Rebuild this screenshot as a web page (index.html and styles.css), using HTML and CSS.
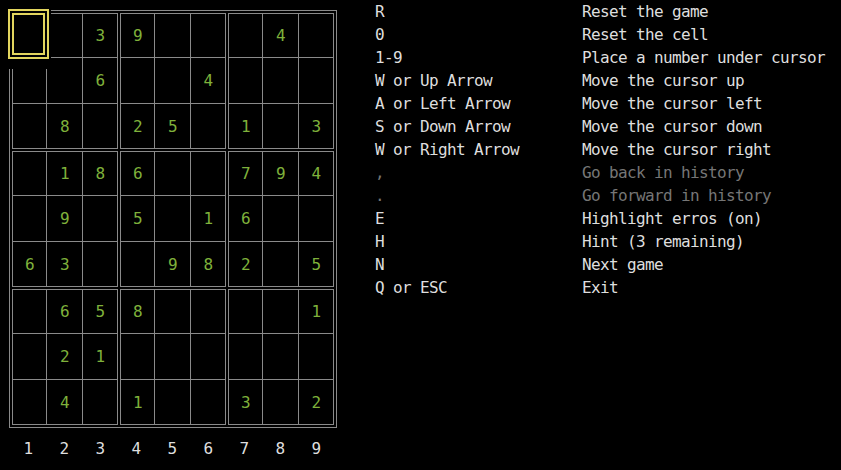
FILE: index.html
```html
<!DOCTYPE html>
<html>
<head>
<meta charset="utf-8">
<link rel="stylesheet" href="styles.css">
</head>
<body>
<div class="screen">
  <section class="game">
    <div class="board">
      <div class="block">
        <div class="cell"></div><div class="cell"></div><div class="cell">3</div>
        <div class="cell"></div><div class="cell"></div><div class="cell">6</div>
        <div class="cell"></div><div class="cell">8</div><div class="cell"></div>
      </div>
      <div class="block">
        <div class="cell">9</div><div class="cell"></div><div class="cell"></div>
        <div class="cell"></div><div class="cell"></div><div class="cell">4</div>
        <div class="cell">2</div><div class="cell">5</div><div class="cell"></div>
      </div>
      <div class="block">
        <div class="cell"></div><div class="cell">4</div><div class="cell"></div>
        <div class="cell"></div><div class="cell"></div><div class="cell"></div>
        <div class="cell">1</div><div class="cell"></div><div class="cell">3</div>
      </div>
      <div class="block">
        <div class="cell"></div><div class="cell">1</div><div class="cell">8</div>
        <div class="cell"></div><div class="cell">9</div><div class="cell"></div>
        <div class="cell">6</div><div class="cell">3</div><div class="cell"></div>
      </div>
      <div class="block">
        <div class="cell">6</div><div class="cell"></div><div class="cell"></div>
        <div class="cell">5</div><div class="cell"></div><div class="cell">1</div>
        <div class="cell"></div><div class="cell">9</div><div class="cell">8</div>
      </div>
      <div class="block">
        <div class="cell">7</div><div class="cell">9</div><div class="cell">4</div>
        <div class="cell">6</div><div class="cell"></div><div class="cell"></div>
        <div class="cell">2</div><div class="cell"></div><div class="cell">5</div>
      </div>
      <div class="block">
        <div class="cell"></div><div class="cell">6</div><div class="cell">5</div>
        <div class="cell"></div><div class="cell">2</div><div class="cell">1</div>
        <div class="cell"></div><div class="cell">4</div><div class="cell"></div>
      </div>
      <div class="block">
        <div class="cell">8</div><div class="cell"></div><div class="cell"></div>
        <div class="cell"></div><div class="cell"></div><div class="cell"></div>
        <div class="cell">1</div><div class="cell"></div><div class="cell"></div>
      </div>
      <div class="block">
        <div class="cell"></div><div class="cell"></div><div class="cell">1</div>
        <div class="cell"></div><div class="cell"></div><div class="cell"></div>
        <div class="cell">3</div><div class="cell"></div><div class="cell">2</div>
      </div>
      <div class="cursor"><div class="cursor-outer"><div class="cursor-inner"></div></div></div>
    </div>
    <div class="labels">
      <span>1</span><span>2</span><span>3</span><span>4</span><span>5</span><span>6</span><span>7</span><span>8</span><span>9</span>
    </div>
  </section>
  <section class="keys">
    <div class="row"><span class="key">R</span><span class="desc">Reset the game</span></div>
    <div class="row"><span class="key">0</span><span class="desc">Reset the cell</span></div>
    <div class="row"><span class="key">1-9</span><span class="desc">Place a number under cursor</span></div>
    <div class="row"><span class="key">W or Up Arrow</span><span class="desc">Move the cursor up</span></div>
    <div class="row"><span class="key">A or Left Arrow</span><span class="desc">Move the cursor left</span></div>
    <div class="row"><span class="key">S or Down Arrow</span><span class="desc">Move the cursor down</span></div>
    <div class="row"><span class="key">W or Right Arrow</span><span class="desc">Move the cursor right</span></div>
    <div class="row dim"><span class="key">,</span><span class="desc">Go back in history</span></div>
    <div class="row dim"><span class="key">.</span><span class="desc">Go forward in history</span></div>
    <div class="row"><span class="key">E</span><span class="desc">Highlight erros (on)</span></div>
    <div class="row"><span class="key">H</span><span class="desc">Hint (3 remaining)</span></div>
    <div class="row"><span class="key">N</span><span class="desc">Next game</span></div>
    <div class="row"><span class="key">Q or ESC</span><span class="desc">Exit</span></div>
  </section>
</div>
</body>
</html>
```

FILE: styles.css
```css
html, body {
  margin: 0;
  padding: 0;
  background: #000;
}

body {
  width: 841px;
  height: 470px;
  overflow: hidden;
  font-family: "DejaVu Sans Mono", "Liberation Mono", monospace;
  font-size: 16px;
  letter-spacing: -0.633px;
  line-height: 23px;
  color: #dedede;
}

.screen {
  display: flex;
  align-items: flex-start;
}

.game {
  padding: 10px 0 0 9px;
  display: flex;
  flex-direction: column;
}

.board {
  position: relative;
  display: grid;
  grid-template-columns: repeat(3, auto);
  gap: 2px;
  padding: 2px;
  border: 1px solid #8a8a8a;
  background: #000;
  width: max-content;
}

.block {
  display: grid;
  grid-template-columns: 33px 35px 34px;
  grid-template-rows: 43px 45px 44px;
  gap: 1px;
  border: 1px solid #8a8a8a;
  background: #8a8a8a;
}

.cell {
  background: #000;
  color: #7fb13b;
  display: flex;
  align-items: center;
  justify-content: center;
}

.cursor {
  position: absolute;
  left: -4px;
  top: -11px;
  width: 45px;
  height: 69px;
  background: #000;
  padding: 9px 0 0 2px;
  box-sizing: border-box;
}

.cursor-outer {
  width: 41px;
  height: 50px;
  box-sizing: border-box;
  border: 2px solid #e2d55e;
  padding: 2px;
}

.cursor-inner {
  height: 100%;
  box-sizing: border-box;
  border: 2px solid #e2d55e;
}

.labels {
  display: flex;
  margin: 9px 0 0 1px;
}

.labels span {
  width: 36px;
  text-align: center;
  color: #dedede;
}

.keys {
  margin-left: 38px;
  display: flex;
  flex-direction: column;
}

.row {
  display: flex;
  height: 23px;
  white-space: pre;
}

.key {
  width: 207px;
}

.dim {
  color: #767676;
}
```
